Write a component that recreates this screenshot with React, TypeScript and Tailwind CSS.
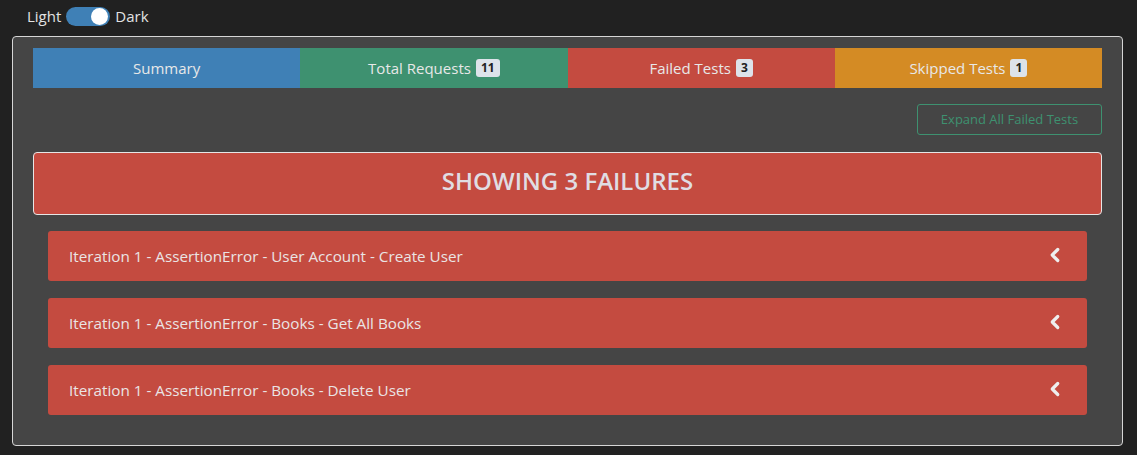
import { ChevronLeft } from "lucide-react";

const tabs = [
  { label: "Summary", count: null, bg: "bg-[#3f80b6]" },
  { label: "Total Requests", count: 11, bg: "bg-[#3e9170]" },
  { label: "Failed Tests", count: 3, bg: "bg-[#c44b40]" },
  { label: "Skipped Tests", count: 1, bg: "bg-[#d48b24]" },
];

const failures = [
  "Iteration 1 - AssertionError - User Account - Create User",
  "Iteration 1 - AssertionError - Books - Get All Books",
  "Iteration 1 - AssertionError - Books - Delete User",
];

export default function App() {
  return (
    <div className="h-[455px] w-[1137px] bg-[#212121] font-['Open_Sans',sans-serif] text-[#e3e3e3]">
      {/* theme toggle */}
      <div className="flex h-[32px] items-center pl-[27px] text-[15px]">
        <span>Light</span>
        <div className="mx-[5px] flex h-[19px] w-[44px] items-center justify-end rounded-full bg-[#3f80b6] px-[2px]">
          <div className="h-[17px] w-[17px] rounded-full bg-white" />
        </div>
        <span>Dark</span>
      </div>

      <div className="mx-[12px] mt-[4px] h-[410px] w-[1111px] rounded-[4px] border border-[#d6d6d6] bg-[#454545] px-[20px] pt-[11px]">
        <div className="grid h-[40px] grid-cols-4">
          {tabs.map((t) => (
            <div
              key={t.label}
              className={`${t.bg} flex items-center justify-center gap-[5px] text-[15px] text-[#e8e8e8]`}
            >
              <span>{t.label}</span>
              {t.count !== null && (
                <span className="rounded-[3px] bg-[#dde3ea] px-[5px] text-[12px] leading-[18px] font-bold text-[#222]">
                  {t.count}
                </span>
              )}
            </div>
          ))}
        </div>

        <div className="mt-[16px] flex justify-end">
          <button className="h-[31px] w-[185px] rounded-[3px] border border-[#3e9170] text-[13px] text-[#3e9170]">
            Expand All Failed Tests
          </button>
        </div>

        <div className="mt-[17px] flex h-[63px] items-center justify-center rounded-[4px] border border-[#e6e6e6] bg-[#c44b40] pb-[5px] text-[24px] font-semibold text-[#e0dde3]">
          SHOWING 3 FAILURES
        </div>

        <div className="mt-[16px] flex flex-col gap-[17px] px-[15px]">
          {failures.map((f) => (
            <div
              key={f}
              className="flex h-[50px] items-center justify-between rounded-[3px] bg-[#c44b40] pl-[21px] pr-[21px] text-[15.25px] text-[#eae4e4]"
            >
              <span>{f}</span>
              <ChevronLeft size={22} strokeWidth={3.5} className="mb-[3px] text-[#eee]" />
            </div>
          ))}
        </div>
      </div>
    </div>
  );
}
